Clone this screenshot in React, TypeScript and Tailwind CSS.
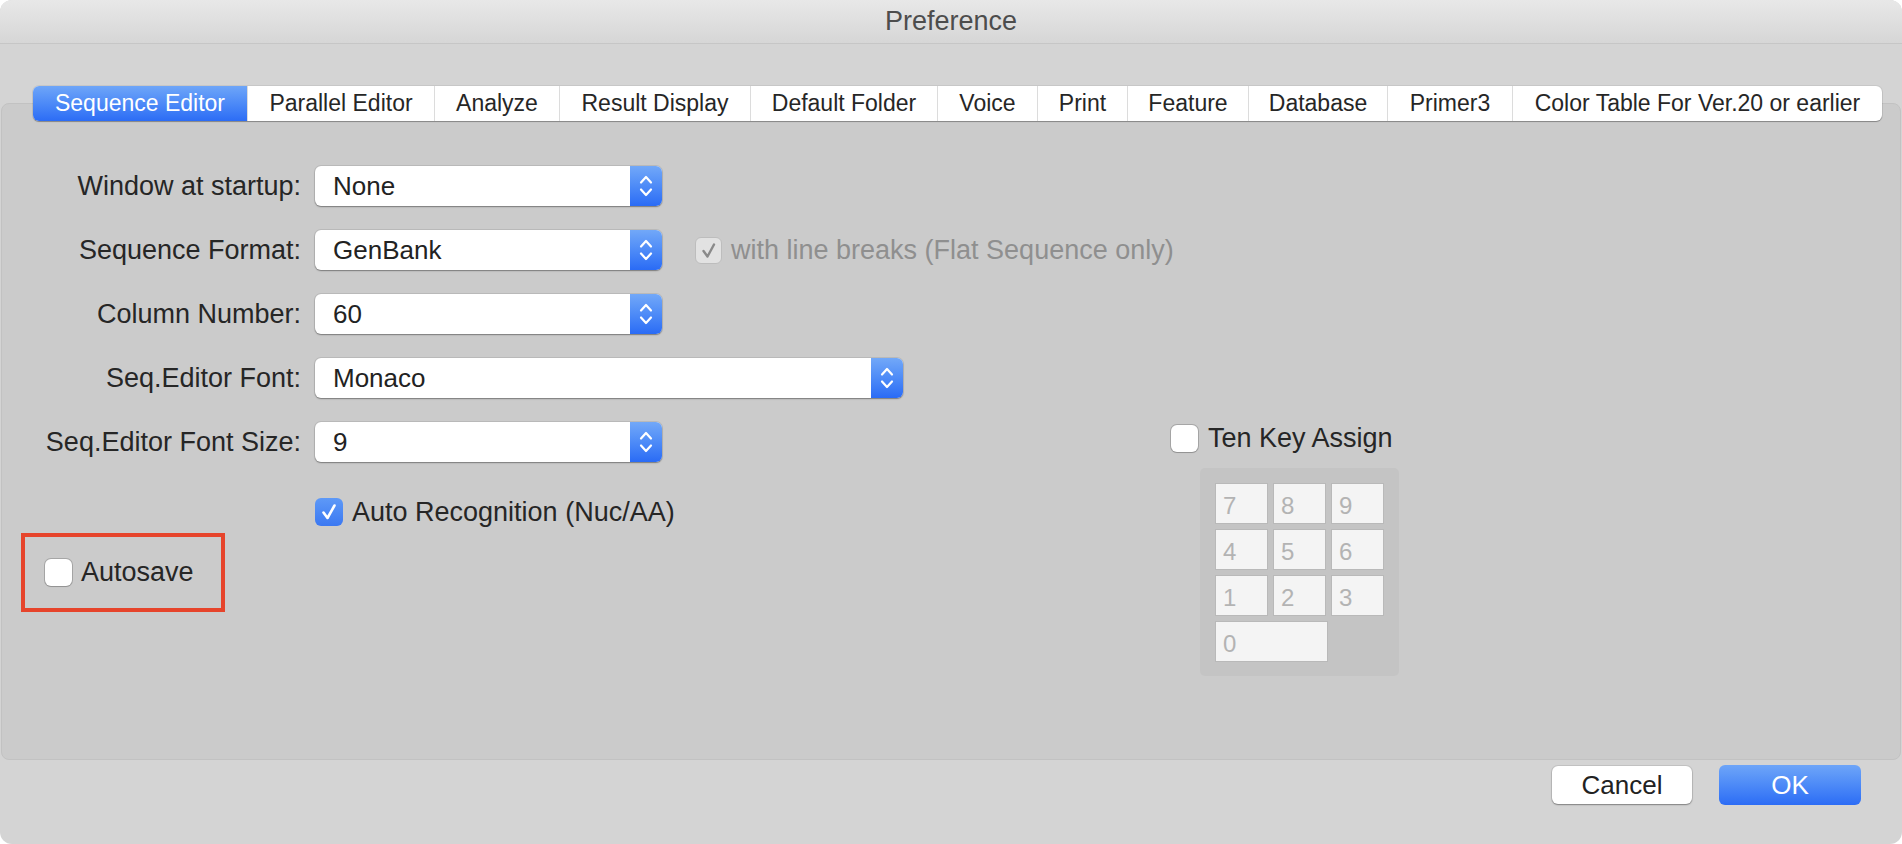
import React from 'react';

const tabs: { label: string; w: string }[] = [
    { label: 'Sequence Editor', w: 'w-[214px]' },
    { label: 'Parallel Editor', w: 'w-[187px]' },
    { label: 'Analyze', w: 'w-[125px]' },
    { label: 'Result Display', w: 'w-[191px]' },
    { label: 'Default Folder', w: 'w-[187px]' },
    { label: 'Voice', w: 'w-[100px]' },
    { label: 'Print', w: 'w-[90px]' },
    { label: 'Feature', w: 'w-[121px]' },
    { label: 'Database', w: 'w-[139px]' },
    { label: 'Primer3', w: 'w-[125px]' },
    { label: 'Color Table For Ver.20 or earlier', w: 'w-[370px]' },
];

const Stepper = () => (
    <div className="w-[32px] h-full shrink-0 rounded-r-[6px] bg-linear-to-b from-[#72a8f8] to-[#2a6bf5]">
        <svg width="32" height="40" viewBox="0 0 32 40" fill="none" stroke="white" strokeWidth="2.2" strokeLinecap="round" strokeLinejoin="round">
            <path d="M11 16.5 16 11 21 16.5" />
            <path d="M11 23.5 16 29 21 23.5" />
        </svg>
    </div>
);

const Select = ({ value, w }: { value: string; w: string }) => (
    <div className={`${w} h-[40px] shrink-0 flex rounded-[6px] bg-white shadow-[0_0_0_1px_rgba(0,0,0,0.08),0_1px_1.5px_rgba(0,0,0,0.35)]`}>
        <div className="flex-1 flex items-center pl-[18px] text-[26px] text-[#222222]">{value}</div>
        <Stepper />
    </div>
);

const Row = ({ label, children }: { label: string; children: React.ReactNode }) => (
    <div className="flex items-center h-[40px]">
        <div className="w-[299px] shrink-0 text-right text-[27px] text-[#262626] whitespace-nowrap">{label}</div>
        <div className="ml-[14px] shrink-0 flex items-center">{children}</div>
    </div>
);

const BlankBox = () => (
    <div className="w-[27px] h-[27px] shrink-0 rounded-[6px] bg-white shadow-[0_0_0_1px_rgba(0,0,0,0.18),0_1px_1px_rgba(0,0,0,0.12)]" />
);

const BlueBox = () => (
    <div className="w-[28px] h-[28px] shrink-0 rounded-[6px] bg-linear-to-b from-[#5e99f7] to-[#3b78f2] flex items-center justify-center">
        <svg width="28" height="28" viewBox="0 0 28 28" fill="none" stroke="white" strokeWidth="2.6" strokeLinecap="round" strokeLinejoin="round">
            <path d="M8.5 14.5 12.5 20 19.5 7.5" />
        </svg>
    </div>
);

const DisabledBox = () => (
    <div className="w-[27px] h-[27px] shrink-0 rounded-[6px] bg-[#e2e2e2] border border-[#bdbdbd] flex items-center justify-center">
        <svg width="25" height="25" viewBox="0 0 25 25" fill="none" stroke="#8a8a8a" strokeWidth="2.4" strokeLinecap="round" strokeLinejoin="round">
            <path d="M7.5 13 11.5 18.5 18 6.5" />
        </svg>
    </div>
);

const Key = ({ n, wide }: { n: string; wide?: boolean }) => (
    <div className={`${wide ? 'col-span-2 w-[113px]' : ''} h-[41px] bg-[#f4f4f4] border border-[#b9b9b9] flex items-center pl-[7px] pt-[5px] text-[24px] text-[#b3b3b3]`}>
        {n}
    </div>
);

export default function App() {
    return (
        <div className="w-[1902px] h-[844px] bg-white font-['Liberation_Sans',Arial,sans-serif] text-[#262626]">
            <div className="w-full h-full rounded-[12px] overflow-hidden bg-[#d4d4d4] flex flex-col">
                {/* title bar */}
                <div className="h-[44px] shrink-0 flex items-center justify-center bg-linear-to-b from-[#e8e8e8] to-[#d6d6d6] border-b border-[#c6c6c6]">
                    <span className="text-[27px] text-[#4d4d4d]">Preference</span>
                </div>

                <div className="flex-1 flex flex-col pt-[59px]">
                    {/* tab panel */}
                    <div className="h-[657px] mx-[1px] rounded-[8px] border border-[#c2c2c2] bg-[#cbcbcb]">
                        <div className="-mt-[18px] ml-[31px] flex h-[35px] w-fit rounded-[6px] bg-white shadow-[0_0_0_1px_rgba(0,0,0,0.06),0_1px_1px_rgba(0,0,0,0.3)]">
                            {tabs.map((t, i) => (
                                <div
                                    key={t.label}
                                    className={`${t.w} h-full flex items-center justify-center text-[23px] whitespace-nowrap ${
                                        i === 0
                                            ? 'rounded-l-[6px] bg-linear-to-b from-[#6ea5f8] to-[#2c6cf5] text-white'
                                            : 'text-[#262626] border-l border-[#dcdcdc]'
                                    } ${i === tabs.length - 1 ? 'rounded-r-[6px]' : ''}`}
                                >
                                    {t.label}
                                </div>
                            ))}
                        </div>

                        <div className="flex pt-[45px]">
                            {/* left form */}
                            <div className="w-[1169px] shrink-0 flex flex-col">
                                <div className="flex flex-col gap-[24px]">
                                    <Row label="Window at startup:">
                                        <Select value="None" w="w-[347px]" />
                                    </Row>
                                    <Row label="Sequence Format:">
                                        <Select value="GenBank" w="w-[347px]" />
                                        <div className="ml-[33px] shrink-0 flex items-center">
                                            <DisabledBox />
                                            <span className="ml-[9px] text-[27px] text-[#8f8f8f] whitespace-nowrap">with line breaks (Flat Sequence only)</span>
                                        </div>
                                    </Row>
                                    <Row label="Column Number:">
                                        <Select value="60" w="w-[347px]" />
                                    </Row>
                                    <Row label="Seq.Editor Font:">
                                        <Select value="Monaco" w="w-[588px]" />
                                    </Row>
                                    <Row label="Seq.Editor Font Size:">
                                        <Select value="9" w="w-[347px]" />
                                    </Row>
                                </div>

                                <div className="mt-[36px] ml-[313px] h-[28px] flex items-center">
                                    <BlueBox />
                                    <span className="ml-[9px] text-[27px] whitespace-nowrap">Auto Recognition (Nuc/AA)</span>
                                </div>

                                <div className="mt-[7px] ml-[19px] w-[204px] h-[79px] border-[4px] border-[#e6442b] flex items-center pl-[20px]">
                                    <BlankBox />
                                    <span className="ml-[9px] text-[27px]">Autosave</span>
                                </div>
                            </div>

                            {/* ten key */}
                            <div className="flex flex-col pt-[258px]">
                                <div className="h-[28px] flex items-center">
                                    <BlankBox />
                                    <span className="ml-[10px] text-[27px] whitespace-nowrap">Ten Key Assign</span>
                                </div>
                                <div className="mt-[16px] ml-[29px] w-[199px] h-[208px] rounded-[5px] bg-[#c4c4c4] p-[15px]">
                                    <div className="grid grid-cols-[53px_53px_53px] gap-[5px]">
                                        {['7', '8', '9', '4', '5', '6', '1', '2', '3'].map((n) => (
                                            <Key key={n} n={n} />
                                        ))}
                                        <Key n="0" wide />
                                    </div>
                                </div>
                            </div>
                        </div>
                    </div>

                    {/* footer */}
                    <div className="flex-1 flex justify-end items-start pt-[6px] pr-[41px] gap-[27px]">
                        <div className="w-[140px] h-[38px] rounded-[6px] bg-white shadow-[0_0_0_1px_rgba(0,0,0,0.08),0_1px_1.5px_rgba(0,0,0,0.35)] flex items-center justify-center text-[26px] text-[#222222]">
                            Cancel
                        </div>
                        <div className="w-[142px] h-[40px] -mt-[1px] rounded-[6px] bg-linear-to-b from-[#6ea5f8] to-[#2c6cf5] flex items-center justify-center text-[26px] text-white">
                            OK
                        </div>
                    </div>
                </div>
            </div>
        </div>
    );
}
